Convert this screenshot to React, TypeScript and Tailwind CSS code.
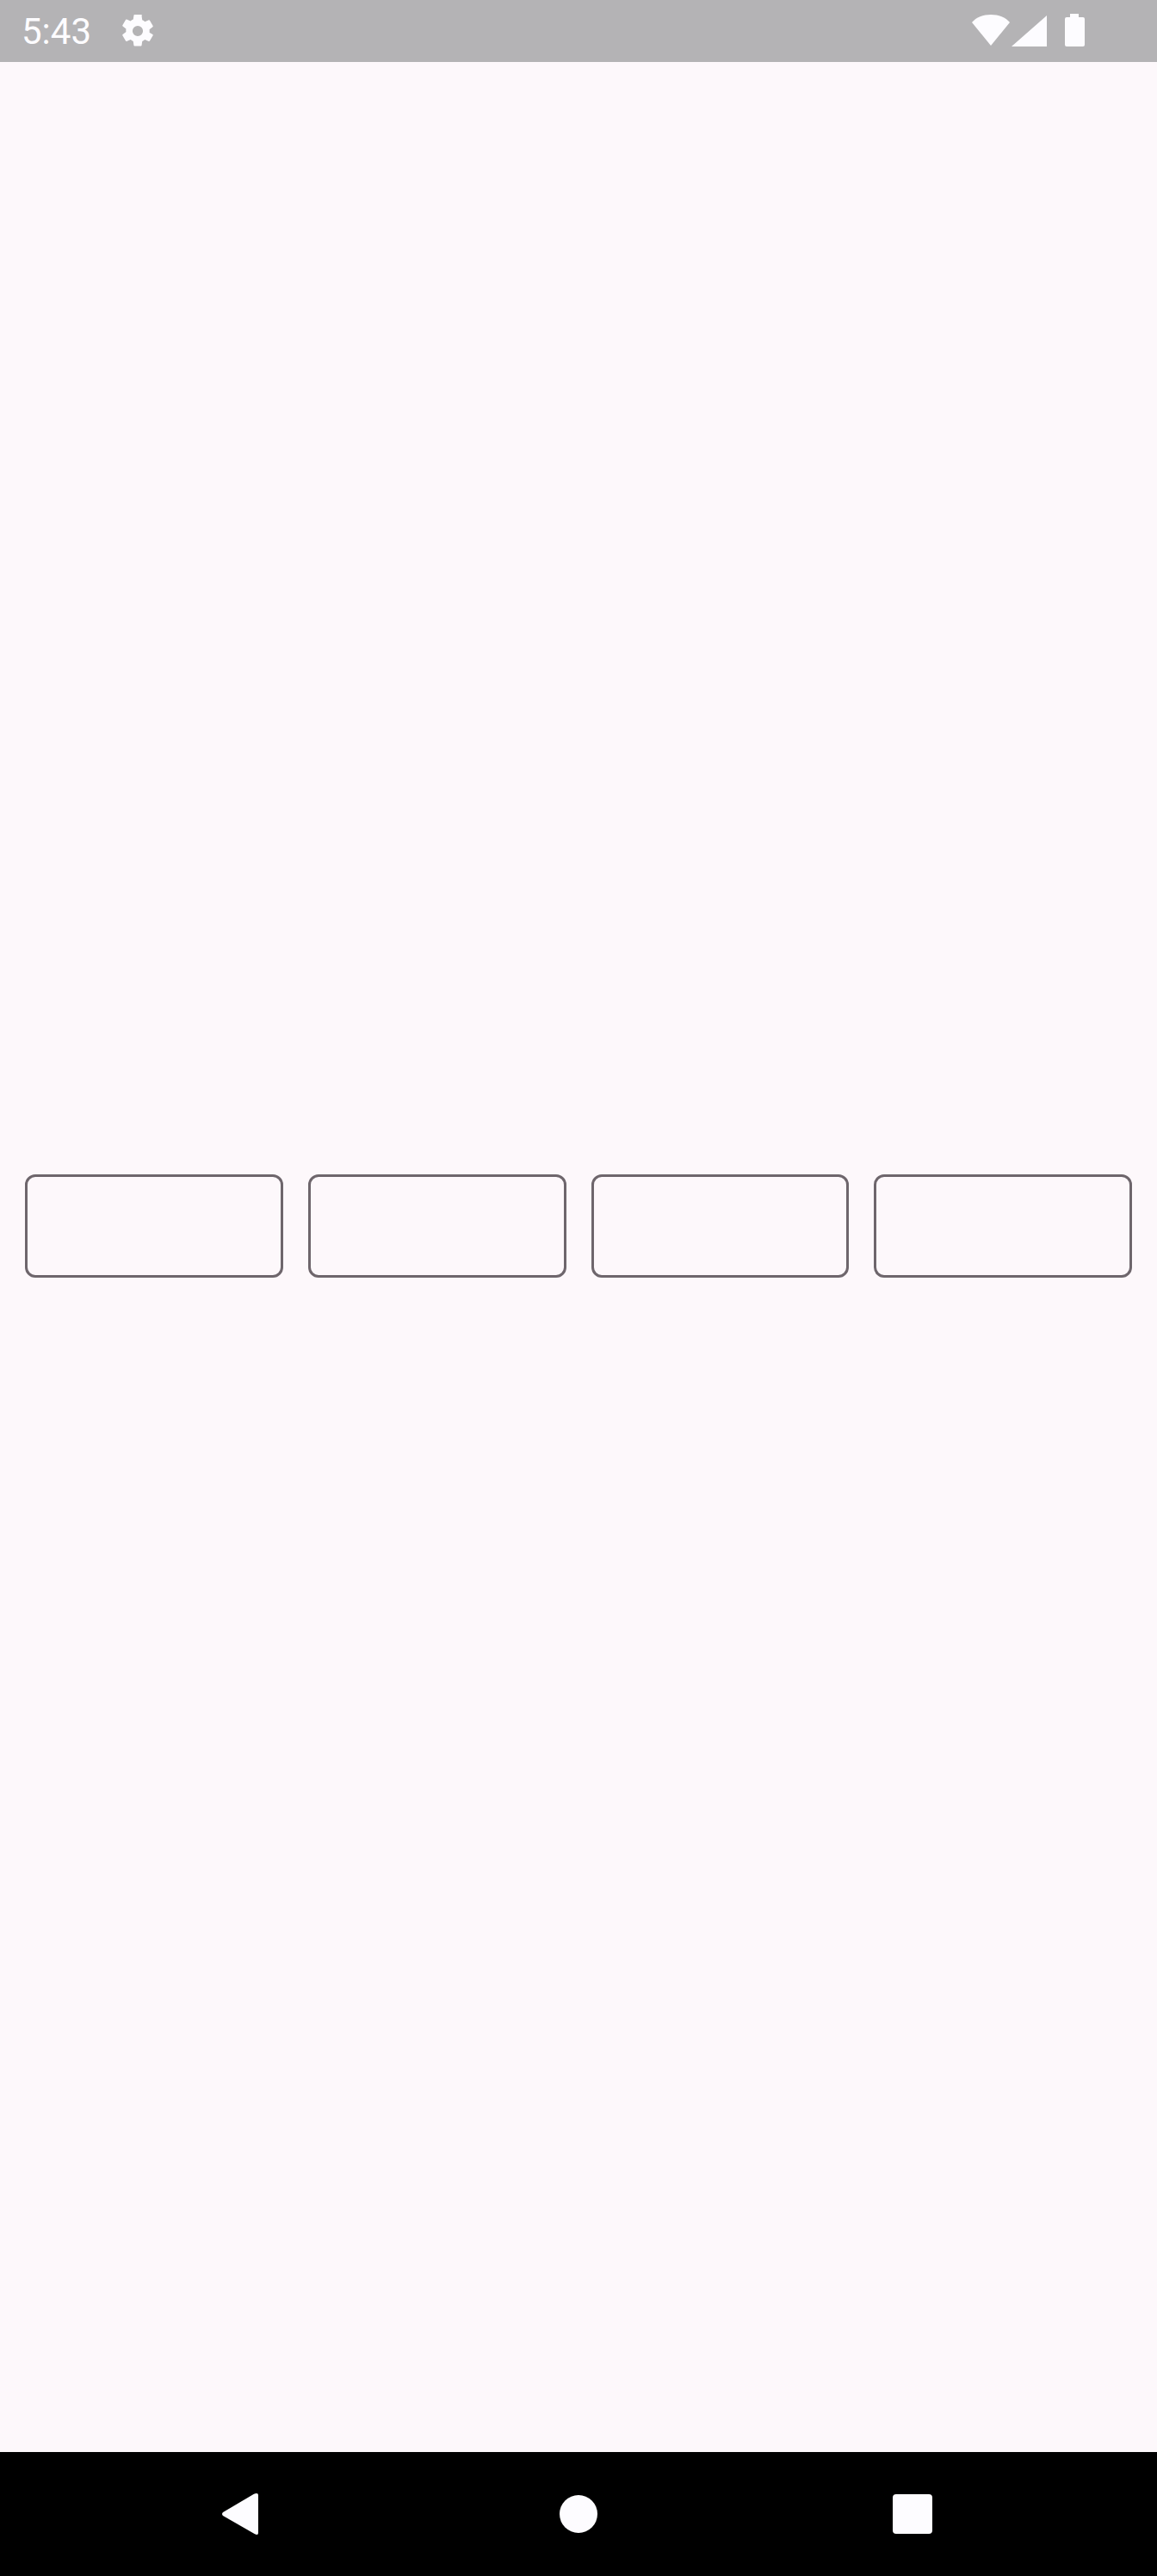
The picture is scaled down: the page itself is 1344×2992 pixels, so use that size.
const fields = ['first', 'second', 'third', 'fourth'];

function StatusBar() {
  return (
    <header className="flex h-[72px] shrink-0 items-start justify-between bg-[#b4b3b5] pl-[25px] pr-[84px] text-[#fdfcff]">
      <div className="flex items-start">
        <span className="mt-[12px] w-[116px] font-[Roboto,sans-serif] text-[42px] leading-[50px]">5:43</span>
        <svg className="mt-[17px] h-[38px] w-[38px]" viewBox="2 2 20 20" fill="currentColor">
          <path d="M19.14 12.94c.04-.3.06-.61.06-.94s-.02-.64-.07-.94l2.03-1.58a.49.49 0 0 0 .12-.61l-1.92-3.32a.49.49 0 0 0-.59-.22l-2.39.96a7 7 0 0 0-1.62-.94l-.36-2.54A.48.48 0 0 0 13.92 2h-3.84a.48.48 0 0 0-.48.41l-.36 2.54c-.59.24-1.13.57-1.62.94l-2.39-.96a.49.49 0 0 0-.59.22L2.72 8.47a.48.48 0 0 0 .12.61l2.03 1.58c-.05.3-.07.62-.07.94s.02.64.07.94l-2.03 1.58a.49.49 0 0 0-.12.61l1.92 3.32c.12.22.37.29.59.22l2.39-.96c.5.38 1.03.7 1.62.94l.36 2.54c.05.24.24.41.48.41h3.84c.24 0 .44-.17.47-.41l.36-2.54a7 7 0 0 0 1.62-.94l2.39.96c.22.08.47 0 .59-.22l1.92-3.32a.48.48 0 0 0-.12-.61zM12 15.2a3.2 3.2 0 1 1 0-6.4 3.2 3.2 0 0 1 0 6.4z" />
        </svg>
      </div>
      <div className="flex items-start pt-[15px]">
        <svg className="h-[40px] w-[46px]" viewBox="0 0 46 40" fill="currentColor">
          <path d="M1 11C6 5 14 2 23 2s17 3 22 9L23 38Z" />
        </svg>
        <svg className="ml-[1px] h-[40px] w-[44px]" viewBox="0 0 44 40" fill="currentColor">
          <path d="M0 39 41 3v36Z" />
        </svg>
        <svg className="ml-[17px] h-[40px] w-[24px]" viewBox="0 0 24 40" fill="currentColor">
          <path d="M7 1h10v4h5q2 0 2 2v30q0 2-2 2H3q-2 0-2-2V7q0-2 2-2h4Z" />
        </svg>
      </div>
    </header>
  );
}

function NavigationBar() {
  return (
    <nav className="flex h-[144px] shrink-0 items-center bg-black pl-[257px] text-[#fdfcff]">
      <svg className="h-[50px] w-[43px]" viewBox="0 0 43 50" fill="currentColor">
        <path d="M2 23 38 1.7Q43 0 43 3v44q0 3-4 1.3L2 27Q0 25 2 23Z" />
      </svg>
      <div className="ml-[350px] size-[44px] rounded-full bg-[#fdfcff]" />
      <div className="ml-[343px] size-[46px] rounded-[4px] bg-[#fdfcff]" />
    </nav>
  );
}

export default function App() {
  return (
    <div className="flex h-[2992px] w-[1344px] flex-col bg-[#fdf8fb]">
      <StatusBar />
      <main className="grid grow grid-cols-4 content-start gap-[29px] px-[29px] pt-[1292px]">
        {fields.map((id) => (
          <div key={id} className="h-[120px] rounded-[12px] border-3 border-[#6e666c]" />
        ))}
      </main>
      <NavigationBar />
    </div>
  );
}
